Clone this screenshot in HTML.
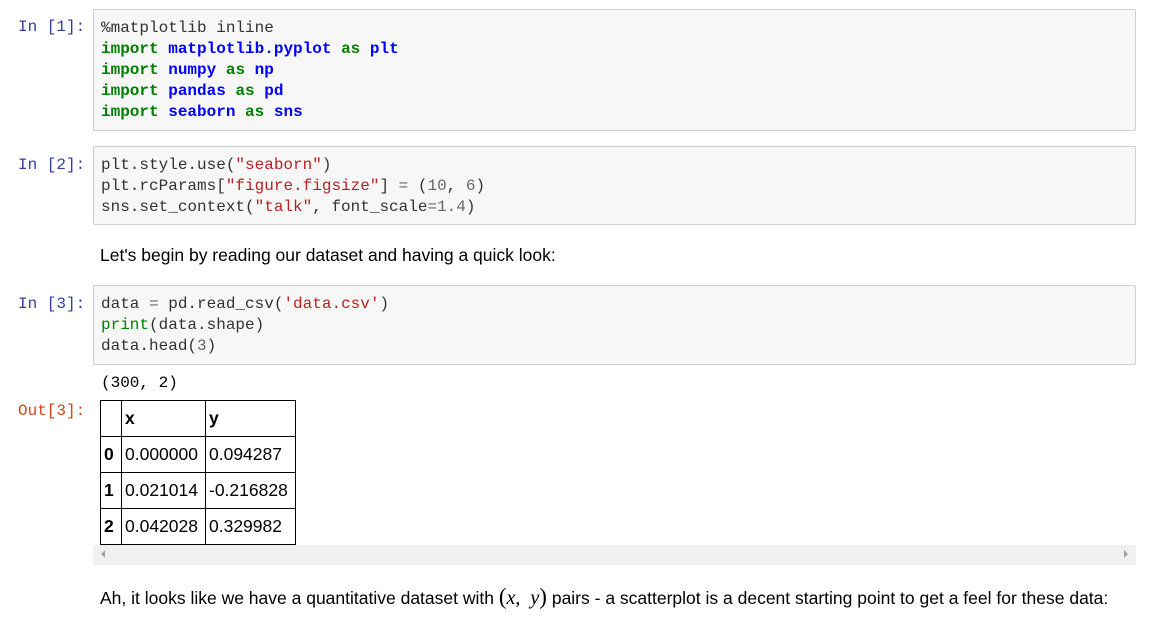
<!DOCTYPE html>
<html><head><style>
body{margin:0;background:#fff;width:1167px;height:625px;position:relative;overflow:hidden;font-family:"Liberation Sans",Arial,sans-serif;}
.p{position:absolute;font-family:"Liberation Mono",monospace;font-size:16px;line-height:21px;white-space:pre;}
.in{color:#303F9F;left:18px;}
.out{color:#D84315;left:18px;}
.box{position:absolute;left:93px;width:1041px;background:#f7f7f7;border:1px solid #cfcfcf;border-radius:2px;}
.code{position:absolute;left:101px;font-family:"Liberation Mono",monospace;font-size:16px;line-height:21px;white-space:pre;color:#333;}
.k{color:#008000;font-weight:bold}.n{color:#0000ff;font-weight:bold}.s{color:#BA2121}.b{color:#008000}.o{color:#666}.m{color:#666}
.md{position:absolute;left:100px;font-size:17.5px;color:#000;white-space:nowrap;}
table{position:absolute;left:100px;top:400px;border-collapse:collapse;font-size:17.5px;}
td,th{border:1px solid #000;height:35px;padding:0 3px;text-align:left;}
th{font-weight:bold}
</style></head><body>
<div class="p in" style="top:17px">In [1]:</div>
<div class="box" style="top:9px;height:120px"></div>
<div class="code" style="top:18px">%matplotlib inline
<span class="k">import</span> <span class="n">matplotlib.pyplot</span> <span class="k">as</span> <span class="n">plt</span>
<span class="k">import</span> <span class="n">numpy</span> <span class="k">as</span> <span class="n">np</span>
<span class="k">import</span> <span class="n">pandas</span> <span class="k">as</span> <span class="n">pd</span>
<span class="k">import</span> <span class="n">seaborn</span> <span class="k">as</span> <span class="n">sns</span></div>

<div class="p in" style="top:155px">In [2]:</div>
<div class="box" style="top:146px;height:77px"></div>
<div class="code" style="top:155px">plt.style.use(<span class="s">"seaborn"</span>)
plt.rcParams[<span class="s">"figure.figsize"</span>] <span class="o">=</span> (<span class="m">10</span>, <span class="m">6</span>)
sns.set_context(<span class="s">"talk"</span>, font_scale<span class="o">=</span><span class="m">1.4</span>)</div>

<div class="md" style="top:245px">Let's begin by reading our dataset and having a quick look:</div>

<div class="p in" style="top:294px">In [3]:</div>
<div class="box" style="top:285px;height:78px"></div>
<div class="code" style="top:294px">data <span class="o">=</span> pd.read_csv(<span class="s">'data.csv'</span>)
<span class="b">print</span>(data.shape)
data.head(<span class="m">3</span>)</div>

<div class="code" style="top:373px;color:#000">(300, 2)</div>
<div class="p out" style="top:401px">Out[3]:</div>
<table>
<tr><th style="width:14px"></th><th style="width:77px">x</th><th style="width:83px">y</th></tr>
<tr><th>0</th><td>0.000000</td><td>0.094287</td></tr>
<tr><th>1</th><td>0.021014</td><td>-0.216828</td></tr>
<tr><th>2</th><td>0.042028</td><td>0.329982</td></tr>
</table>
<div style="position:absolute;left:93px;top:545px;width:1043px;height:20px;background:#f0f0f0"></div>
<div style="position:absolute;left:101px;top:550px;width:0;height:0;border-top:4px solid transparent;border-bottom:4px solid transparent;border-right:4px solid #a3a3a3"></div>
<div style="position:absolute;left:1124px;top:550px;width:0;height:0;border-top:4px solid transparent;border-bottom:4px solid transparent;border-left:4px solid #a3a3a3"></div>

<div class="md" style="top:584px">Ah, it looks like we have a quantitative dataset with <span style="font-family:'Liberation Serif',serif;font-size:20px"><span style="font-size:23px">(</span><i>x</i>, &nbsp;<i>y</i><span style="font-size:23px">)</span></span> pairs - a scatterplot is a decent starting point to get a feel for these data:</div>
</body></html>
